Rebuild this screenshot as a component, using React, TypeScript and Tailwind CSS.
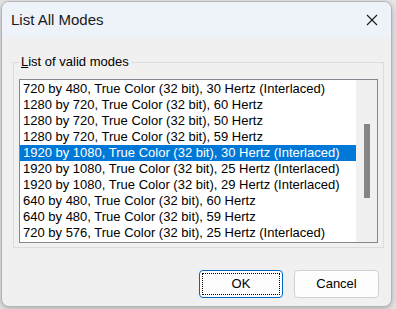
const modes = [
  "720 by 480, True Color (32 bit), 30 Hertz (Interlaced)",
  "1280 by 720, True Color (32 bit), 60 Hertz",
  "1280 by 720, True Color (32 bit), 50 Hertz",
  "1280 by 720, True Color (32 bit), 59 Hertz",
  "1920 by 1080, True Color (32 bit), 30 Hertz (Interlaced)",
  "1920 by 1080, True Color (32 bit), 25 Hertz (Interlaced)",
  "1920 by 1080, True Color (32 bit), 29 Hertz (Interlaced)",
  "640 by 480, True Color (32 bit), 60 Hertz",
  "640 by 480, True Color (32 bit), 59 Hertz",
  "720 by 576, True Color (32 bit), 25 Hertz (Interlaced)",
];

const SELECTED = 4;

export default function App() {
  return (
    <div className="h-[309px] w-[396px] overflow-hidden bg-[#e6e6e6] pl-[1px] pt-[1px] font-['Liberation_Sans',sans-serif] text-[#000]">
      <div className="flex h-[306px] w-[391px] flex-col overflow-hidden rounded-[8px] border border-[#b4b4b4] bg-[#f0f0f0] shadow-[0_2px_6px_rgba(0,0,0,0.25)]">
        {/* title bar */}
        <div className="flex h-[36px] shrink-0 items-center justify-between bg-[#eef2f9] pl-[9px] pr-[12px]">
          <span className="text-[15px] text-[#1a1a1a]">List All Modes</span>
          <svg width="12" height="12" viewBox="0 0 12 12" className="mr-[1px]">
            <path d="M1 1 L11 11 M11 1 L1 11" stroke="#1a1a1a" strokeWidth="1.1" />
          </svg>
        </div>

        {/* body */}
        <div className="flex flex-1 flex-col px-[11px] pt-[16px]">
          <fieldset className="w-[371px] border border-[#dcdcdc] px-[5px] pb-[4px]">
            <legend className="px-[2px] text-[13px] leading-[16px]">
              <span className="underline">L</span>ist of valid modes
            </legend>
            <div className="mt-[9px] flex h-[164px] border border-[#828790] bg-white">
              <ul className="flex-1 overflow-hidden pt-[1px]">
                {modes.map((m, i) => (
                  <li
                    key={i}
                    className={
                      i === SELECTED
                        ? "h-[16px] whitespace-nowrap bg-[#0078d7] pl-[3px] text-[13px] leading-[16px] text-white"
                        : "h-[16px] whitespace-nowrap pl-[3px] text-[13px] leading-[16px]"
                    }
                  >
                    {m}
                  </li>
                ))}
              </ul>
              <div className="flex w-[21px] justify-center bg-[#f0f0f0] pt-[44px]">
                <div className="h-[74px] w-[6px] bg-[#858585]" />
              </div>
            </div>
          </fieldset>

          <div className="mt-[22px] flex justify-end gap-[11px] pr-[1px]">
            <button className="relative h-[28px] w-[84px] rounded-[4px] border border-[#0067c0] bg-[#fdfdfd] text-[13px]">
              <span className="absolute inset-[2px] border border-dotted border-[#000]" />
              OK
            </button>
            <button className="h-[28px] w-[85px] rounded-[4px] border border-[#d0d0d0] bg-[#fdfdfd] text-[13px]">
              Cancel
            </button>
          </div>
        </div>
      </div>
    </div>
  );
}
